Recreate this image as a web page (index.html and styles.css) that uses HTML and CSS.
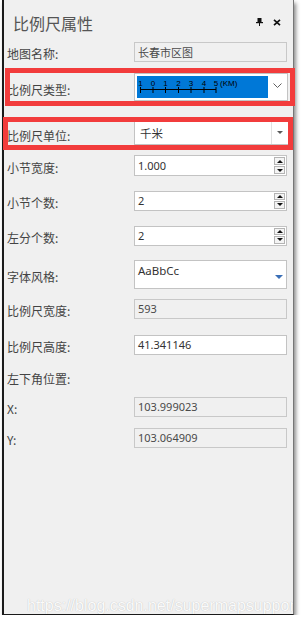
FILE: index.html
```html
<!DOCTYPE html>
<html lang="zh">
<head>
<meta charset="utf-8">
<title>比例尺属性</title>
<link rel="stylesheet" href="styles.css">
</head>
<body>
<div class="panel">
  <div class="titlebar">
    <span class="title">比例尺属性</span>
    <span class="tools">
      <svg class="pin" width="7" height="8" viewBox="0 0 7 8"><rect x="1.5" y="0" width="4" height="4.5" fill="#111"/><rect x="0" y="4" width="7" height="1.2" fill="#111"/><rect x="3" y="5" width="1" height="3" fill="#111"/></svg>
      <svg class="close" width="8" height="7" viewBox="0 0 8 7"><path d="M1 0.8 L7 6.2 M7 0.8 L1 6.2" stroke="#111" stroke-width="1.7"/></svg>
    </span>
  </div>

  <div class="form">
    <div class="row r1">
      <span class="label">地图名称:</span>
      <div class="field disabled">长春市区图</div>
    </div>
    <div class="row r2">
      <span class="label">比例尺类型:</span>
      <div class="field combo scale">
        <div class="sel">
          <svg width="131" height="22" viewBox="0 0 131 22">
            <g font-family="Liberation Sans, Arial, sans-serif" font-size="8" fill="#000" text-anchor="middle">
              <text x="3.5" y="10">1</text>
              <text x="16" y="10">0</text>
              <text x="28.5" y="10">1</text>
              <text x="41.5" y="10">2</text>
              <text x="54" y="10">3</text>
              <text x="67" y="10">4</text>
              <text x="79" y="10">5</text>
              <text x="83" y="10" text-anchor="start">(KM)</text>
            </g>
            <path d="M3 13.5 H79 M3.5 11 V17 M16 11 V17 M28.5 11 V17 M41.5 11 V17 M54 11 V17 M67 11 V17 M79 11 V17" stroke="#000" stroke-width="1" fill="none"/>
          </svg>
        </div>
        <span class="chev"><svg width="9" height="5" viewBox="0 0 9 5"><polyline points="0.5,0.5 4.5,4.5 8.5,0.5" fill="none" stroke="#606060" stroke-width="1"/></svg></span>
      </div>
    </div>
    <div class="row r3">
      <span class="label">比例尺单位:</span>
      <div class="field combo unit">
        <span class="val">千米</span>
        <span class="btn"><i class="tri-down"></i></span>
      </div>
    </div>
    <div class="row r4">
      <span class="label">小节宽度:</span>
      <div class="field spinbox"><span class="val">1.000</span><span class="spin"><b><i class="tri-up"></i></b><b><i class="tri-dn"></i></b></span></div>
    </div>
    <div class="row r5">
      <span class="label">小节个数:</span>
      <div class="field spinbox"><span class="val">2</span><span class="spin"><b><i class="tri-up"></i></b><b><i class="tri-dn"></i></b></span></div>
    </div>
    <div class="row r6">
      <span class="label">左分个数:</span>
      <div class="field spinbox"><span class="val">2</span><span class="spin"><b><i class="tri-up"></i></b><b><i class="tri-dn"></i></b></span></div>
    </div>
    <div class="row r7">
      <span class="label">字体风格:</span>
      <div class="field fontstyle"><span class="val">AaBbCc</span><i class="tri-blue"></i></div>
    </div>
    <div class="row r8">
      <span class="label">比例尺宽度:</span>
      <div class="field disabled">593</div>
    </div>
    <div class="row r9">
      <span class="label">比例尺高度:</span>
      <div class="field">41.341146</div>
    </div>
    <div class="row r10">
      <span class="label">左下角位置:</span>
    </div>
    <div class="row r11">
      <span class="label">X:</span>
      <div class="field disabled">103.999023</div>
    </div>
    <div class="row r12">
      <span class="label">Y:</span>
      <div class="field disabled">103.064909</div>
    </div>
  </div>

  <div class="mark mark1"></div>
  <div class="mark mark2"></div>
  <div class="watermark">https://blog.csdn.net/supermapsupport</div>
</div>
</body>
</html>
```

FILE: styles.css
```css
html, body {
  margin: 0;
  padding: 0;
  background: #ffffff;
}

.panel {
  position: relative;
  box-sizing: border-box;
  margin-left: 2px;
  width: 292px;
  height: 615px;
  background: #f0f0f0;
  border-left: 2px solid #1a1a1a;
  border-right: 1px solid #777777;
  border-bottom: 1px solid #1a1a1a;
  box-shadow: 2px 3px 4px rgba(0, 0, 0, 0.45);
  font-family: "Noto Sans CJK SC", "Noto Sans", sans-serif;
  color: #3c3c3c;
}

.titlebar {
  display: flex;
  align-items: flex-start;
  height: 41px;
}

.title {
  padding-left: 9px;
  padding-top: 13px;
  font-size: 16px;
  line-height: 20px;
  color: #555555;
}

.tools {
  margin-left: auto;
  display: flex;
  align-items: center;
  gap: 10px;
  padding-top: 18px;
  padding-right: 12px;
}

.pin, .close {
  display: block;
}

.form {
  display: flex;
  flex-direction: column;
  padding-left: 3px;
}

.row {
  display: grid;
  grid-template-columns: 127px 153px;
  align-items: center;
}

.label {
  font-size: 12px;
  line-height: 16px;
  padding-top: 5px;
  white-space: nowrap;
  color: #444444;
}

.field {
  box-sizing: border-box;
  height: 20px;
  display: flex;
  align-items: center;
  padding-left: 3px;
  background: #ffffff;
  border: 1px solid #c3c3c3;
  font-family: "Noto Sans", "Noto Sans CJK SC", sans-serif;
  font-size: 11px;
  color: #333333;
  white-space: nowrap;
}

.field.disabled {
  background: #f0f0f0;
  border-color: #c8c8c8;
  color: #4a4a4a;
}

.r2 { margin-top: 11px; }
.r3 { margin-top: 20px; }
.r4 { margin-top: 10px; }
.r5 { margin-top: 14px; }
.r6 { margin-top: 14px; }
.r7 { margin-top: 14px; }
.r8 { margin-top: 9px; }
.r9 { margin-top: 15px; }
.r10 { margin-top: 11px; height: 20px; }
.r11 { margin-top: 10px; }
.r12 { margin-top: 10px; }

/* scale type combo */
.combo.scale {
  width: 154px;
  height: 28px;
  padding: 2px 0 2px 2px;
  align-items: stretch;
}

.sel {
  width: 131px;
  height: 22px;
  background: #0078d7;
}

.sel svg {
  display: block;
}

.chev {
  flex: 1;
  display: flex;
  align-items: center;
  justify-content: center;
  padding-bottom: 3px;
}

.chev svg {
  display: block;
}

/* unit combo */
.combo.unit {
  width: 155px;
  height: 24px;
  padding-left: 5px;
  padding-right: 0;
  align-items: stretch;
  font-family: "Noto Sans CJK SC", sans-serif;
  font-size: 11.5px;
}

.combo.unit .val {
  display: flex;
  align-items: center;
  padding-bottom: 1px;
}

.combo.unit .btn {
  margin-left: auto;
  width: 16px;
  border-left: 1px solid #e1e1e1;
  display: flex;
  align-items: center;
  justify-content: center;
  padding-bottom: 1px;
}

.tri-down {
  display: block;
  width: 0;
  height: 0;
  border-left: 3px solid transparent;
  border-right: 3px solid transparent;
  border-top: 3px solid #5a5a5a;
}

/* spin boxes */
.spinbox {
  padding-right: 1px;
  align-items: stretch;
}

.spinbox .val {
  display: flex;
  align-items: center;
}

.r4 .spinbox {
  height: 21px;
}

.spin {
  margin-left: auto;
  width: 11px;
  display: flex;
  flex-direction: column;
  padding: 1px 0;
  gap: 1px;
}

.spin b {
  flex: 1;
  box-sizing: border-box;
  border: 1px solid #b4b4b4;
  background: #f4f4f4;
  display: flex;
  align-items: center;
  justify-content: center;
}

.tri-up {
  display: block;
  width: 0;
  height: 0;
  border-left: 3px solid transparent;
  border-right: 3px solid transparent;
  border-bottom: 3px solid #111;
}

.tri-dn {
  display: block;
  width: 0;
  height: 0;
  border-left: 3px solid transparent;
  border-right: 3px solid transparent;
  border-top: 3px solid #111;
}

/* font style */
.fontstyle {
  height: 29px;
  align-items: flex-start;
  padding-top: 3px;
  font-size: 11.5px;
}

.fontstyle .val {
  line-height: 14px;
}

.tri-blue {
  display: block;
  margin-left: auto;
  margin-right: 3px;
  margin-top: 11px;
  width: 0;
  height: 0;
  border-left: 4px solid transparent;
  border-right: 4px solid transparent;
  border-top: 4px solid #3b6fb6;
}

/* annotation overlays */
.mark {
  position: absolute;
  box-sizing: border-box;
  border: 5px solid #f23c3c;
  pointer-events: none;
}

.mark1 {
  left: 1px;
  top: 68px;
  width: 290px;
  height: 38px;
}

.mark2 {
  left: -1px;
  top: 117px;
  width: 290px;
  height: 33px;
}

.watermark {
  position: absolute;
  left: 23px;
  right: 0;
  top: 597px;
  overflow: hidden;
  white-space: nowrap;
  font-family: "Liberation Sans", Arial, sans-serif;
  font-size: 16px;
  line-height: 18px;
  color: rgba(255, 255, 255, 0.95);
  text-shadow: 0 0 1px rgba(0, 0, 0, 0.25);
}
```
